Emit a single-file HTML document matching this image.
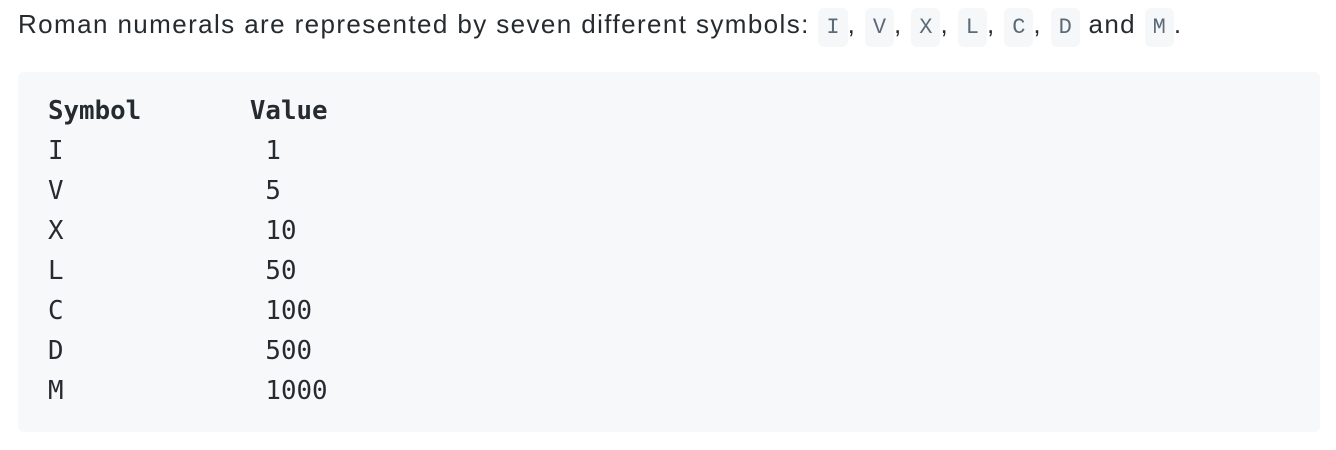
<!DOCTYPE html>
<html><head><style>
body{margin:0;background:#fff;width:1336px;height:450px;overflow:hidden;font-family:"Liberation Sans",sans-serif;color:#262b30}
p{position:absolute;left:18px;top:4px;margin:0;font-size:26px;letter-spacing:1.4px;line-height:40px;white-space:nowrap}
code{font-family:"Liberation Mono",monospace;font-size:22px;letter-spacing:0;color:#5b6b79;background:#f5f7f9;border-radius:6px;padding:7px 8px;margin:0}
pre{position:absolute;left:18px;top:72px;width:1302px;height:360px;box-sizing:border-box;margin:0;background:#f7f8fa;border-radius:6px;padding:19px 30px 0 30px;font-family:"DejaVu Sans Mono",monospace;font-size:25.8px;line-height:40px;color:#262b30}
b{font-weight:bold}
</style></head><body>
<p>Roman numerals are represented by seven different symbols: <code>I</code>, <code>V</code>, <code>X</code>, <code>L</code>, <code>C</code>, <code>D</code> and <code>M</code>.</p>
<pre><b>Symbol</b>       <b>Value</b>
I             1
V             5
X             10
L             50
C             100
D             500
M             1000</pre>
</body></html>
